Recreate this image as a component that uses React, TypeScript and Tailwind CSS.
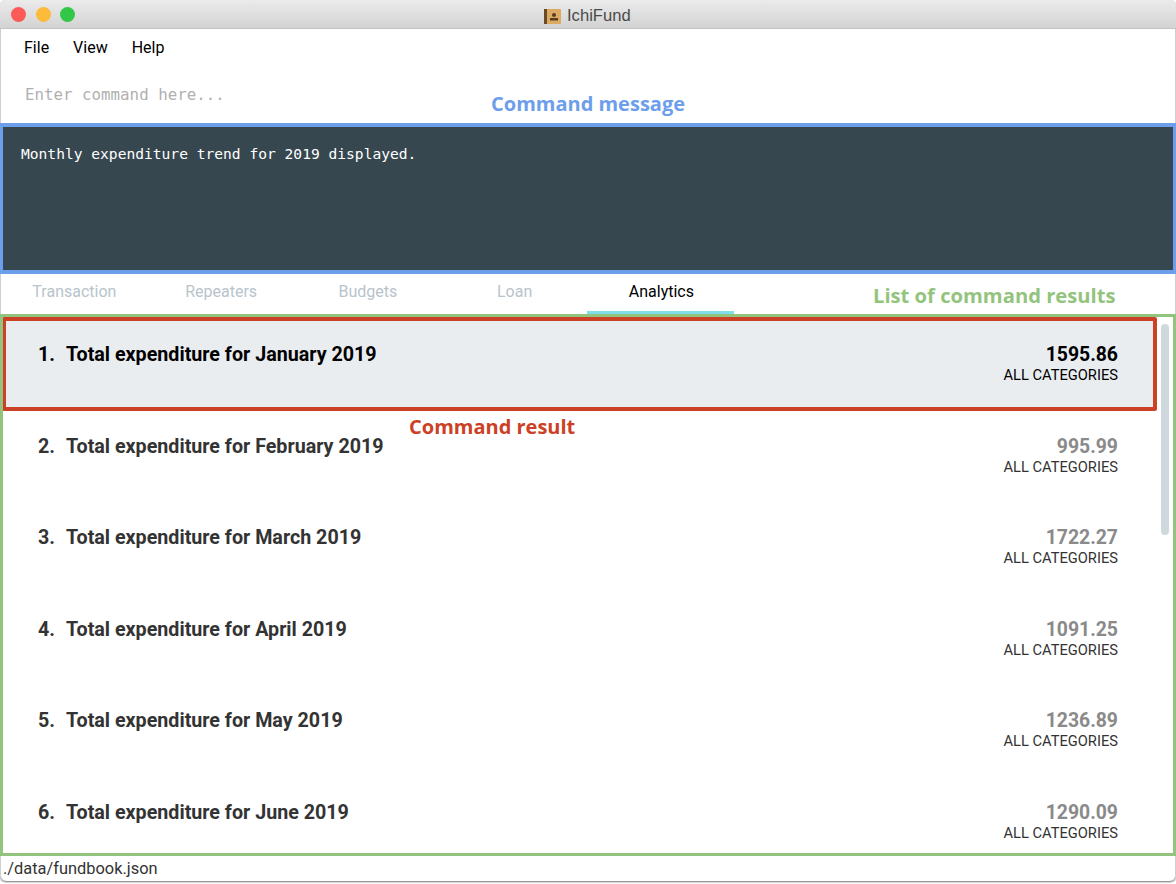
const rows = [
  ["1.", "Total expenditure for January 2019", "1595.86"],
  ["2.", "Total expenditure for February 2019", "995.99"],
  ["3.", "Total expenditure for March 2019", "1722.27"],
  ["4.", "Total expenditure for April 2019", "1091.25"],
  ["5.", "Total expenditure for May 2019", "1236.89"],
  ["6.", "Total expenditure for June 2019", "1290.09"],
];
const tabs = ["Transaction", "Repeaters", "Budgets", "Loan", "Analytics"];
const roboto = "font-['Roboto',sans-serif]";
const mono = "font-['DejaVu_Sans_Mono',monospace]";
const note = "font-['Open_Sans',sans-serif] font-bold leading-none absolute";

export default function App() {
  return (
    <div className={`w-[1176px] h-[884px] bg-white overflow-hidden ${roboto}`}>
      <div className="w-full h-[881px] bg-white rounded-[6px] flex flex-col overflow-hidden shadow-[inset_1px_0_0_#cfcfcf,inset_-1px_0_0_#cfcfcf,0_1px_2px_rgba(0,0,0,0.55)]">
        <div className="h-[29px] shrink-0 bg-gradient-to-b from-[#ebebeb] to-[#d3d3d3] border-b border-[#c4c4c4] flex items-center relative">
          <div className="flex gap-[9.5px] pl-[11px] pt-px">
            <span className="w-[15px] h-[15px] rounded-full bg-[#fc5b57]" />
            <span className="w-[15px] h-[15px] rounded-full bg-[#fdbb3a]" />
            <span className="w-[15px] h-[15px] rounded-full bg-[#33c748]" />
          </div>
          <div className="absolute left-[544px] top-[8px] flex items-center gap-[6px]">
            <svg width="17" height="15" viewBox="0 0 17 15">
              <rect x="0" y="0" width="17" height="15" rx="1" fill="#dcaa62" />
              <rect x="0" y="0" width="3" height="15" fill="#6b4a2a" />
              <circle cx="10" cy="6" r="2" fill="#5a3d1e" />
              <rect x="6" y="9" width="8" height="2.5" fill="#5a3d1e" />
            </svg>
            <span className="font-['Liberation_Sans',sans-serif] text-[16.6px] leading-none text-[#4a4a4a]">IchiFund</span>
          </div>
        </div>

        <div className="h-[36px] shrink-0 flex items-center pl-[24px] pt-[2px] gap-[24px] text-[16px] text-black">
          <span>File</span>
          <span>View</span>
          <span>Help</span>
        </div>

        <div className="h-[58px] shrink-0 relative">
          <div className={`pl-[25px] pt-[20px] text-[15.8px] leading-[20px] text-[#b0b0b0] ${mono}`}>Enter command here...</div>
          <span className={`${note} text-[20px] left-[491px] top-[29px] text-[#6d9eeb]`}>Command message</span>
        </div>

        <div className="h-[151px] shrink-0 bg-[#37474f] border-[3px] border-y-4 border-[#6d9eeb] pl-[18px] pt-[17px]">
          <div className={`text-[14.6px] leading-[20px] text-white ${mono}`}>Monthly expenditure trend for 2019 displayed.</div>
        </div>

        <div className="h-[40px] shrink-0 flex relative">
          {tabs.map((t, i) => (
            <div
              key={t}
              className={`w-[146.75px] h-[40px] flex items-center justify-center pl-[2px] text-[16px] ${i === 4 ? "text-black border-b-[3px] border-[#80deea] pb-px" : "text-[#b8c4cc] pb-[4px]"}`}
            >
              {t}
            </div>
          ))}
          <span className={`${note} text-[20.2px] left-[873px] top-[11px] text-[#93c47d]`}>List of command results</span>
        </div>

        <div className="h-[542px] shrink-0 border-[3px] border-[#93c47d] relative flex overflow-hidden">
          <div className="flex-1 min-w-0">
            {rows.map((r, i) => (
              <div
                key={r[0]}
                className={`flex items-start justify-between ${i === 0 ? "h-[93.5px] bg-[#eaedf0] border-4 border-[#cc4125] rounded-[2px] mr-px -ml-px" : "h-[91.67px]"}`}
              >
                <div className={`flex text-[19.7px] leading-[24px] font-bold ${i === 0 ? "text-black pl-[32px] pt-[22px]" : "text-[#333333] pl-[35px] pt-[24px]"}`}>
                  <span className="w-[28px]">{r[0]}</span>
                  <span>{r[1]}</span>
                </div>
                <div className={`text-right ${i === 0 ? "pr-[35px] pt-[22px]" : "pr-[40px] pt-[24px]"}`}>
                  <div className={`text-[19.4px] leading-[24px] font-bold ${i === 0 ? "text-black" : "text-[#8a8a8a]"}`}>{r[2]}</div>
                  <div className={`text-[14.7px] leading-[19px] -mt-px ${i === 0 ? "text-black" : "text-[#333333]"}`}>ALL CATEGORIES</div>
                </div>
              </div>
            ))}
          </div>
          <div className="w-[15px] shrink-0 pl-[3px] pt-[7px]">
            <div className="w-[8px] h-[211px] bg-[#cfd8dc] rounded-full" />
          </div>
          <span className={`${note} text-[20px] left-[406px] top-[100px] text-[#cc4125]`}>Command result</span>
        </div>

        <div className="flex-1 pl-[3px] text-[16.4px] leading-[26px] text-[#333333]">./data/fundbook.json</div>
      </div>
    </div>
  );
}
